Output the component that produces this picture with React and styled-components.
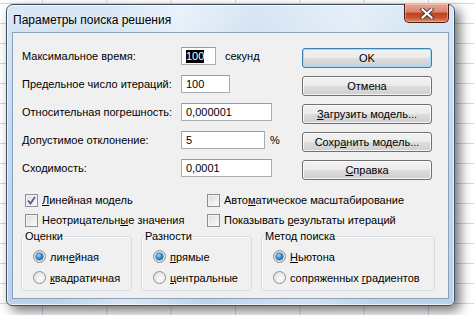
import React from 'react';
import styled, { createGlobalStyle } from 'styled-components';

const GlobalStyle = createGlobalStyle`
  html, body {
    margin: 0;
    padding: 0;
  }
  body {
    width: 474px;
    height: 315px;
    overflow: hidden;
    background-color: #ffffff;
    background-image:
      linear-gradient(to right, #d0d7e5 1px, transparent 1px),
      linear-gradient(to bottom, #d0d7e5 1px, transparent 1px);
    background-size: 64.33px 20px;
    background-position: 42px 3px;
    font-family: "Liberation Sans", Arial, sans-serif;
    font-size: 11px;
    color: #000;
  }
`;

const Desktop = styled.div`
  padding: 4px 0 0 6px;
`;

const Window = styled.div`
  width: 449px;
  height: 302px;
  box-sizing: border-box;
  border: 1px solid #3f4f63;
  border-radius: 7px 7px 6px 6px;
  background:
    linear-gradient(100deg, rgba(255,255,255,0) 20%, rgba(255,255,255,0.45) 35%, rgba(255,255,255,0) 50%, rgba(255,255,255,0.35) 70%, rgba(255,255,255,0) 85%),
    linear-gradient(to bottom, #d9e7f5, #c4d8ee 40%, #bcd2ea);
  box-shadow: 5px 5px 12px rgba(0, 0, 0, 0.55), inset 0 0 0 1px rgba(255, 255, 255, 0.7);
  display: flex;
  flex-direction: column;
  padding: 0 5px 6px 5px;
`;

const TitleBar = styled.div`
  height: 27px;
  display: flex;
  justify-content: space-between;
  align-items: flex-start;
`;

const Title = styled.div`
  font-size: 12px;
  line-height: 13px;
  padding: 9px 0 0 1px;
  color: #000;
  text-shadow: 0 0 6px rgba(255, 255, 255, 0.9);
`;

const CloseButton = styled.div`
  width: 45px;
  height: 19px;
  margin-top: -1px;
  box-sizing: border-box;
  border: 1px solid #4a1d14;
  border-top: none;
  border-radius: 0 0 5px 5px;
  background: linear-gradient(to bottom, #e9a897 0%, #d8836b 45%, #c2401f 50%, #c9502f 75%, #e08b6c 100%);
  box-shadow: inset 0 0 0 1px rgba(255, 200, 180, 0.5);
  display: flex;
  align-items: center;
  justify-content: center;
`;

const Client = styled.div`
  flex: 1;
  border: 1px solid #8ba2bf;
  background: #f0f0f0;
  display: flex;
  flex-direction: column;
`;

const TopSection = styled.div`
  display: flex;
  padding: 9px 0 0 9px;
`;

const Form = styled.div`
  width: 280px;
  display: flex;
  flex-direction: column;
`;

const FormRow = styled.div`
  height: 28px;
  display: grid;
  grid-template-columns: 159px auto;
  align-items: center;
`;

const Field = styled.div`
  display: flex;
  align-items: center;
`;

const TextBox = styled.div`
  width: ${(p) => p.$w}px;
  height: 18px;
  box-sizing: border-box;
  border: 1px solid #abadb3;
  border-top-color: #9a9ca3;
  background: #fff;
  padding-left: 4px;
  display: flex;
  align-items: center;
  line-height: 13px;
`;

const Selected = styled.span`
  background: #000;
  color: #fff;
`;

const Suffix = styled.span`
  margin-left: ${(p) => p.$gap}px;
`;

const ButtonColumn = styled.div`
  width: 130px;
  padding-top: 6px;
  display: flex;
  flex-direction: column;
  gap: 8px;
`;

const Button = styled.div`
  height: 20px;
  box-sizing: border-box;
  border: 1px solid ${(p) => (p.$default ? '#3c7fb1' : '#707070')};
  border-radius: 3px;
  background: linear-gradient(to bottom, #f2f2f2 0%, #ebebeb 49%, #dddddd 50%, #cfcfcf 100%);
  box-shadow: inset 0 0 0 1px ${(p) => (p.$default ? '#9fdcf8' : 'rgba(255,255,255,0.75)')};
  display: flex;
  align-items: center;
  justify-content: center;
`;

const U = styled.span`
  text-decoration: underline;
`;

const CheckGrid = styled.div`
  margin-top: 8px;
  padding-left: 12px;
  display: grid;
  grid-template-columns: 182px auto;
  grid-auto-rows: 20px;
  align-items: center;
`;

const CheckRow = styled.div`
  display: flex;
  align-items: center;
  gap: 4px;
`;

const CheckBox = styled.span`
  width: 13px;
  height: 13px;
  box-sizing: border-box;
  border: 1px solid #8e8f8f;
  background: linear-gradient(135deg, #dcdcdc, #fbfbfb);
  box-shadow: inset 0 0 0 1px #f4f4f4;
  display: flex;
  align-items: center;
  justify-content: center;
`;

const Groups = styled.div`
  display: flex;
  gap: 9px;
  padding-left: 8px;
`;

const GroupBox = styled.fieldset`
  width: ${(p) => p.$w}px;
  box-sizing: border-box;
  margin: 0;
  padding: 3px 0 2px 11px;
  border: 1px solid #d5dfe5;
  border-radius: 3px;
  box-shadow: inset 1px 1px 0 #fbfbfb;
  display: flex;
  flex-direction: column;
`;

const Legend = styled.legend`
  padding: 0 1px;
  margin-left: -9px;
  line-height: 13px;
`;

const RadioRow = styled.div`
  height: 21px;
  display: flex;
  align-items: center;
  gap: 4px;
`;

const Radio = styled.span`
  width: 13px;
  height: 13px;
  box-sizing: border-box;
  border-radius: 50%;
  border: 1px solid #8e8f8f;
  background: radial-gradient(circle at 60% 60%, #fdfdfd, #d8d8d8);
  display: flex;
  align-items: center;
  justify-content: center;
`;

const RadioDot = styled.span`
  width: 7px;
  height: 7px;
  border-radius: 50%;
  background: radial-gradient(circle at 40% 35%, #9cd9ff 0%, #2f8fd3 45%, #0f4c86 100%);
  box-shadow: 0 0 0 0.5px #1b4f7a;
`;

const CloseGlyph = () => (
  <svg width="14" height="11" viewBox="0 0 14 11">
    <path d="M2.5 1.5 L11.5 9.5 M11.5 1.5 L2.5 9.5" stroke="#3b3b3b" strokeWidth="4" strokeLinecap="square" />
    <path d="M2.5 1.5 L11.5 9.5 M11.5 1.5 L2.5 9.5" stroke="#ffffff" strokeWidth="2.2" strokeLinecap="square" />
  </svg>
);

const Check = ({ checked, children }) => (
  <CheckRow>
    <CheckBox>
      {checked && (
        <svg width="9" height="9" viewBox="0 0 9 9">
          <path d="M1 4.5 L3.5 7.5 L8 1" fill="none" stroke="#4a5f8f" strokeWidth="1.8" />
        </svg>
      )}
    </CheckBox>
    <span>{children}</span>
  </CheckRow>
);

const Option = ({ checked, children }) => (
  <RadioRow>
    <Radio>{checked && <RadioDot />}</Radio>
    <span>{children}</span>
  </RadioRow>
);

const fields = [
  { label: 'Максимальное время:', w: 35, value: <Selected>100</Selected>, suffix: 'секунд', gap: 9 },
  { label: 'Предельное число итераций:', w: 49, value: '100' },
  { label: 'Относительная погрешность:', w: 91, value: '0,000001' },
  { label: 'Допустимое отклонение:', w: 84, value: '5', suffix: '%', gap: 5 },
  { label: 'Сходимость:', w: 91, value: '0,0001' },
];

export default function App() {
  return (
    <>
      <GlobalStyle />
      <Desktop>
        <Window>
          <TitleBar>
            <Title>Параметры поиска решения</Title>
            <CloseButton>
              <CloseGlyph />
            </CloseButton>
          </TitleBar>
          <Client>
            <TopSection>
              <Form>
                {fields.map((f) => (
                  <FormRow key={f.label}>
                    <span>{f.label}</span>
                    <Field>
                      <TextBox $w={f.w}>{f.value}</TextBox>
                      {f.suffix && <Suffix $gap={f.gap}>{f.suffix}</Suffix>}
                    </Field>
                  </FormRow>
                ))}
              </Form>
              <ButtonColumn>
                <Button $default>OK</Button>
                <Button>Отмена</Button>
                <Button><span><U>З</U>агрузить модель...</span></Button>
                <Button><span>Сохр<U>а</U>нить модель...</span></Button>
                <Button><span><U>С</U>правка</span></Button>
              </ButtonColumn>
            </TopSection>
            <CheckGrid>
              <Check checked><U>Л</U>инейная модель</Check>
              <Check>Авто<U>м</U>атическое масштабирование</Check>
              <Check>Неотрицательн<U>ы</U>е значения</Check>
              <Check>Показывать <U>р</U>езультаты итераций</Check>
            </CheckGrid>
            <Groups>
              <GroupBox $w={111}>
                <Legend>Оценки</Legend>
                <Option checked>лин<U>е</U>йная</Option>
                <Option><U>к</U>вадратичная</Option>
              </GroupBox>
              <GroupBox $w={111}>
                <Legend>Разности</Legend>
                <Option checked><U>п</U>рямые</Option>
                <Option><U>ц</U>ентральные</Option>
              </GroupBox>
              <GroupBox $w={174}>
                <Legend>Метод поиска</Legend>
                <Option checked><U>Н</U>ьютона</Option>
                <Option>сопряженных <U>г</U>радиентов</Option>
              </GroupBox>
            </Groups>
          </Client>
        </Window>
      </Desktop>
    </>
  );
}
